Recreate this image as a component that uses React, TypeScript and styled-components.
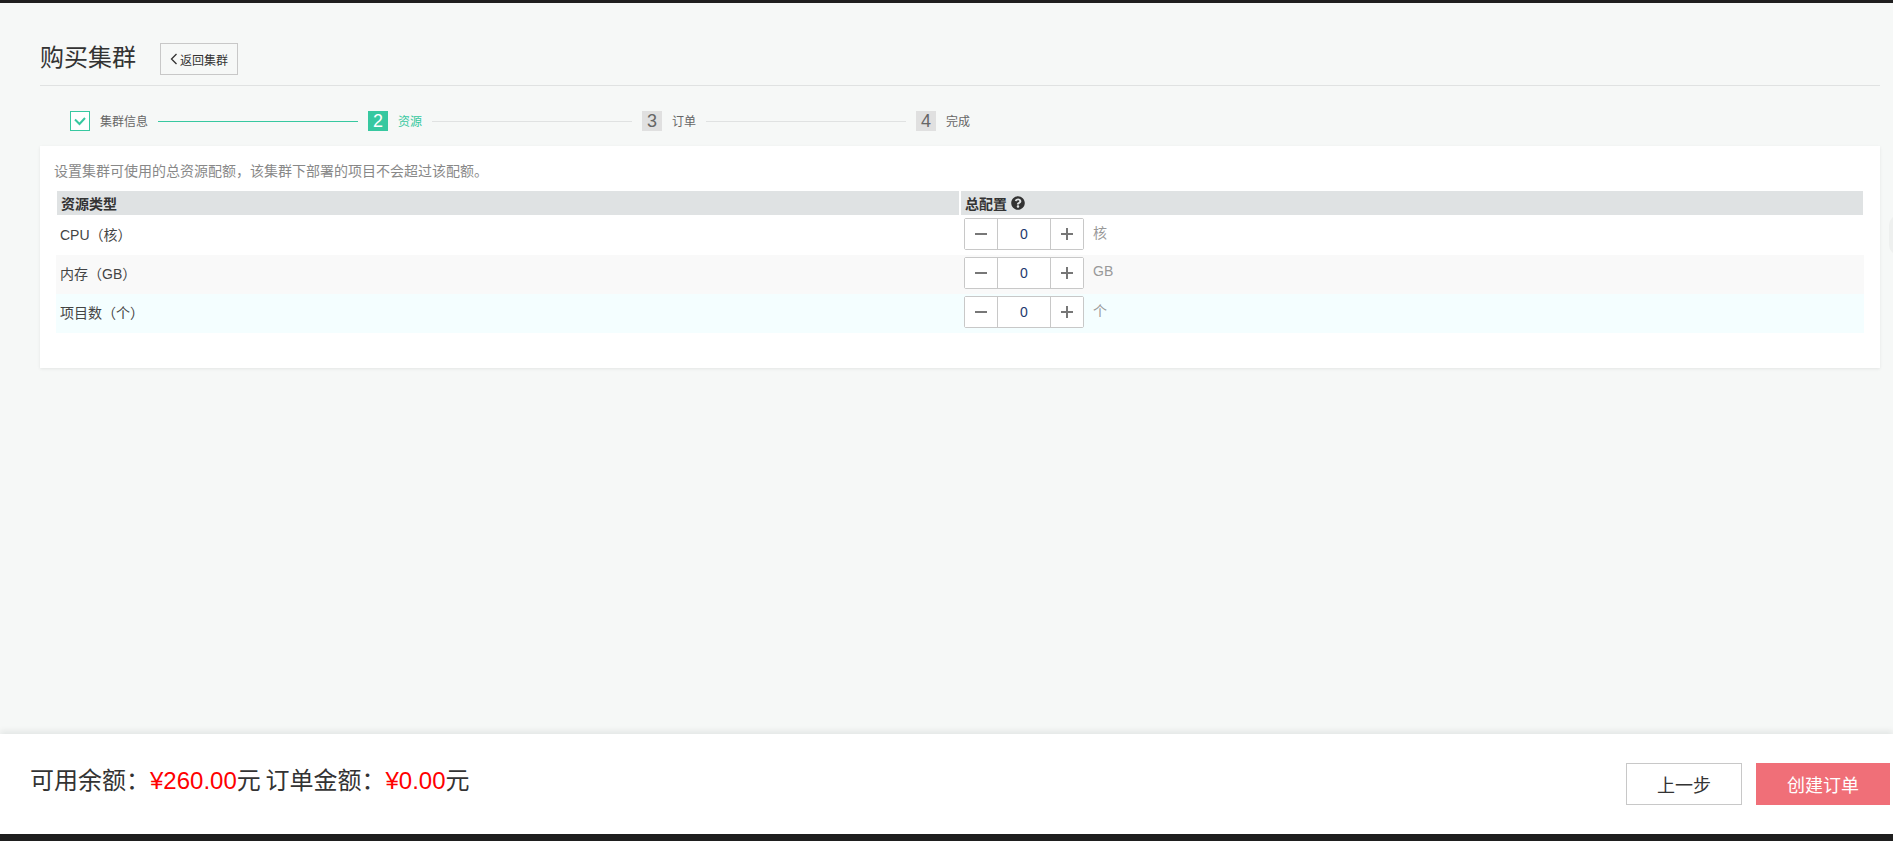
import styled, { createGlobalStyle } from "styled-components";
import { FaQuestionCircle } from "react-icons/fa";

const Global = createGlobalStyle`
    html, body {
        margin: 0;
        height: 100%;
        overflow: hidden;
    }
    body {
        font-family: "Liberation Sans", "Noto Sans CJK SC", sans-serif;
        font-size: 12px;
        color: #333;
    }
`

const Page = styled.div`
    position: relative;
    height: 841px;
    box-sizing: border-box;
    display: flex;
    flex-direction: column;
    border-top: 3px solid #1f1f1f;
    border-bottom: 7px solid #1f1f1f;
    background: #f6f8f7;
`

const Main = styled.main`
    flex: 1;
    padding: 40px 13px 0 40px;
`

const Header = styled.header`
    display: flex;
    align-items: center;
    gap: 24px;
    height: 42px;
    border-bottom: 1px solid #e0e2e2;
`

const Title = styled.h1`
    margin: 0 0 12px;
    font-size: 24px;
    font-weight: 400;
    line-height: 32px;
    color: #333;
`

const BackButton = styled.button`
    display: flex;
    align-items: center;
    justify-content: center;
    gap: 2px;
    width: 78px;
    height: 32px;
    margin-bottom: 10px;
    padding: 0;
    background: transparent;
    border: 1px solid #c8c8c8;
    font-family: inherit;
    font-size: 12px;
    color: #333;
`

const Steps = styled.ol`
    display: flex;
    align-items: center;
    height: 20px;
    margin: 25px 0 15px;
    padding: 0 0 0 30px;
    list-style: none;
`

const Step = styled.li`
    display: flex;
    align-items: center;
`

const StepNumber = styled.span<{ $active?: boolean }>`
    display: flex;
    align-items: center;
    justify-content: center;
    width: 20px;
    height: 20px;
    font-size: 18px;
    background: ${(p) => (p.$active ? "#37c8a0" : "#e0e0e0")};
    color: ${(p) => (p.$active ? "#fff" : "#666")};
`

const StepDone = styled.span`
    display: flex;
    align-items: center;
    justify-content: center;
    box-sizing: border-box;
    width: 20px;
    height: 20px;
    border: 1px solid #37c8a0;
    background: #fff;
`

const StepLabel = styled.span<{ $active?: boolean }>`
    margin: -2px 0 0 10px;
    font-size: 12px;
    color: ${(p) => (p.$active ? "#37c8a0" : "#666")};
`

const StepLine = styled.span<{ $done?: boolean }>`
    width: 200px;
    height: 1px;
    margin: 0 10px;
    background: ${(p) => (p.$done ? "#37c8a0" : "#e0e2e2")};
`

const Card = styled.section`
    height: 222px;
    box-sizing: border-box;
    padding: 15px 16px 0 14px;
    background: #fff;
    box-shadow: 0 1px 3px rgba(0, 0, 0, 0.08);
`

const Description = styled.p`
    margin: 0 0 10px;
    font-size: 14px;
    line-height: 20px;
    color: #888;
`

const Table = styled.div`
    margin-left: 2px;
`

const HeadRow = styled.div`
    display: grid;
    grid-template-columns: 902px 1fr;
    gap: 2px;
    margin: 0 1px 1px 1px;
`

const HeadCell = styled.div`
    display: flex;
    align-items: center;
    gap: 4px;
    height: 24px;
    padding-left: 4px;
    background: #dfe2e3;
    font-size: 14px;
    font-weight: bold;
    color: #333;
`

const Row = styled.div<{ $bg: string }>`
    display: grid;
    grid-template-columns: 908px 1fr;
    align-items: start;
    height: 39px;
    padding-top: 2px;
    box-sizing: border-box;
    background: ${(p) => p.$bg};
`

const RowName = styled.div`
    padding: 7px 0 0 4px;
    font-size: 14px;
    line-height: 20px;
    color: #444;
`

const ValueCell = styled.div`
    display: flex;
    align-items: center;
    gap: 9px;
`

const Stepper = styled.div`
    display: flex;
    box-sizing: border-box;
    width: 120px;
    height: 32px;
    background: #fff;
    border: 1px solid #c8c8c8;
    border-radius: 2px;
`

const StepperButton = styled.button`
    display: flex;
    align-items: center;
    justify-content: center;
    width: 32px;
    padding: 0;
    background: #fff;
    border: none;
    color: #777;
`

const StepperValue = styled.div`
    flex: 1;
    display: flex;
    align-items: center;
    justify-content: center;
    border-left: 1px solid #c8c8c8;
    border-right: 1px solid #c8c8c8;
    font-size: 14px;
    color: #1d3a6e;
`

const Unit = styled.span`
    margin-top: -4px;
    font-size: 14px;
    color: #999;
`

const SideHandle = styled.div`
    position: absolute;
    top: 212px;
    right: -16px;
    width: 20px;
    height: 40px;
    border-radius: 10px;
    background: #eef0ef;
`

const Footer = styled.footer`
    display: flex;
    align-items: center;
    justify-content: space-between;
    height: 100px;
    padding: 0 3px 0 30px;
    background: #fff;
    box-shadow: 0 -3px 6px rgba(0, 20, 30, 0.08);
`

const Summary = styled.div`
    margin-top: -12px;
    font-size: 24px;
    word-spacing: -2px;
    color: #333;
`

const Money = styled.span`
    color: #f00;
`

const FooterActions = styled.div`
    display: flex;
    gap: 14px;
`

const PrevButton = styled.button`
    width: 116px;
    height: 42px;
    padding: 0;
    background: #fff;
    border: 1px solid #c8c8c8;
    font-family: inherit;
    font-size: 18px;
    color: #333;
`

const CreateButton = styled.button`
    width: 134px;
    height: 42px;
    padding: 0;
    background: #f06f78;
    border: none;
    font-family: inherit;
    font-size: 18px;
    color: #fff;
`

const rows = [
    { name: "CPU（核）", unit: "核", bg: "#fff" },
    { name: "内存（GB）", unit: "GB", bg: "#f9f9f9" },
    { name: "项目数（个）", unit: "个", bg: "#f4feff" },
];

export default function App() {
    return (
        <>
            <Global />
            <Page>
                <Main>
                    <Header>
                        <Title>购买集群</Title>
                        <BackButton>
                            <svg width="8" height="12" viewBox="0 0 8 12" fill="none" stroke="#333" strokeWidth="1.3">
                                <path d="M6.5 1 L1.5 6 L6.5 11" />
                            </svg>
                            返回集群
                        </BackButton>
                    </Header>
                    <Steps>
                        <Step>
                            <StepDone>
                                <svg width="14" height="12" viewBox="0 0 14 12" fill="none" stroke="#37c8a0" strokeWidth="2">
                                    <path d="M2 4.5 L6.5 9 L12 3" />
                                </svg>
                            </StepDone>
                            <StepLabel>集群信息</StepLabel>
                            <StepLine $done />
                        </Step>
                        <Step>
                            <StepNumber $active>2</StepNumber>
                            <StepLabel $active>资源</StepLabel>
                            <StepLine />
                        </Step>
                        <Step>
                            <StepNumber>3</StepNumber>
                            <StepLabel>订单</StepLabel>
                            <StepLine />
                        </Step>
                        <Step>
                            <StepNumber>4</StepNumber>
                            <StepLabel>完成</StepLabel>
                        </Step>
                    </Steps>
                    <Card>
                        <Description>设置集群可使用的总资源配额，该集群下部署的项目不会超过该配额。</Description>
                        <Table>
                            <HeadRow>
                                <HeadCell>资源类型</HeadCell>
                                <HeadCell>
                                    总配置
                                    <FaQuestionCircle size={14} color="#333" />
                                </HeadCell>
                            </HeadRow>
                            {rows.map((row) => (
                                <Row key={row.name} $bg={row.bg}>
                                    <RowName>{row.name}</RowName>
                                    <ValueCell>
                                        <Stepper>
                                            <StepperButton>
                                                <svg width="12" height="12" viewBox="0 0 12 12" fill="#777">
                                                    <rect x="0" y="5" width="12" height="2" />
                                                </svg>
                                            </StepperButton>
                                            <StepperValue>0</StepperValue>
                                            <StepperButton>
                                                <svg width="12" height="12" viewBox="0 0 12 12" fill="#777">
                                                    <rect x="0" y="5" width="12" height="2" />
                                                    <rect x="5" y="0" width="2" height="12" />
                                                </svg>
                                            </StepperButton>
                                        </Stepper>
                                        <Unit>{row.unit}</Unit>
                                    </ValueCell>
                                </Row>
                            ))}
                        </Table>
                    </Card>
                </Main>
                <SideHandle />
                <Footer>
                    <Summary>
                        可用余额：<Money>¥260.00</Money>元 订单金额：<Money>¥0.00</Money>元
                    </Summary>
                    <FooterActions>
                        <PrevButton>上一步</PrevButton>
                        <CreateButton>创建订单</CreateButton>
                    </FooterActions>
                </Footer>
            </Page>
        </>
    )
}
